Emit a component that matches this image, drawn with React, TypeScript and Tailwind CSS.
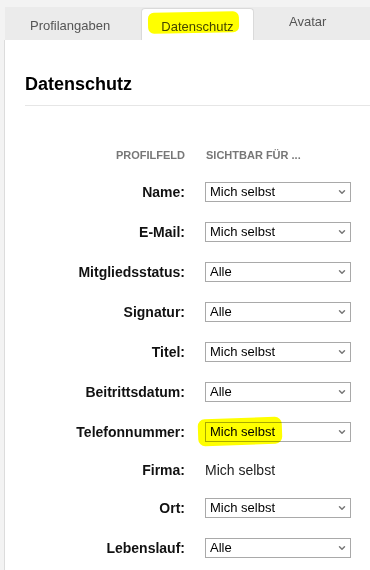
import { ChevronDown } from "lucide-react";

type Row = { label: string; value: string; fixed?: boolean; marked?: boolean };

const ROWS: Row[] = [
  { label: "Name", value: "Mich selbst" },
  { label: "E-Mail", value: "Mich selbst" },
  { label: "Mitgliedsstatus", value: "Alle" },
  { label: "Signatur", value: "Alle" },
  { label: "Titel", value: "Mich selbst" },
  { label: "Beitrittsdatum", value: "Alle" },
  { label: "Telefonnummer", value: "Mich selbst", marked: true },
  { label: "Firma", value: "Mich selbst", fixed: true },
  { label: "Ort", value: "Mich selbst" },
  { label: "Lebenslauf", value: "Alle" },
];

const OPTIONS = ["Mich selbst", "Mitglieder", "Alle"];

function VisibilitySelect({ value, marked }: { value: string; marked?: boolean }) {
  return (
    <div className="relative w-[146px] h-[20px]">
      <select
        defaultValue={value}
        className="block w-full h-full appearance-none border border-[#a9a9a9] bg-white pl-[4px] pr-[16px] text-[13px] leading-[18px] text-black outline-none"
      >
        {OPTIONS.map((o) => (
          <option key={o}>{o}</option>
        ))}
      </select>
      <ChevronDown
        className="pointer-events-none absolute right-[4px] top-[5px] h-[10px] w-[10px] text-[#777]"
        strokeWidth={3.5}
        aria-hidden="true"
      />
      {/* marker stroke */}
      {marked && (
        <div
          className="pointer-events-none absolute left-[-7px] top-[-4px] h-[27px] w-[84px] -rotate-2 rounded-[7px] bg-[#ffff00] mix-blend-multiply"
          aria-hidden="true"
        />
      )}
    </div>
  );
}

export default function App() {
  return (
    <div className="min-h-screen bg-[#f3f3f3] pt-[7px] pl-[4px] font-['Liberation_Sans',Arial,sans-serif]">
      {/* Tabs */}
      <div className="ml-[1px] flex h-[33px] items-end bg-[#ebebeb] text-[13px] leading-[15px] text-[#555]">
        <div className="h-full w-[136px] pl-[25px] pt-[11px]">Profilangaben</div>
        <div className="relative h-[32px] w-[113px] rounded-t-[4px] border border-b-0 border-[#dadada] bg-white pt-[10px] text-center text-[#444]">
          Datenschutz
          <div
            className="pointer-events-none absolute left-[6px] top-[3px] h-[21px] w-[91px] -rotate-1 rounded-[6px] bg-[#ffff00] mix-blend-multiply"
            aria-hidden="true"
          />
        </div>
        <div className="h-full pl-[35px] pt-[7px]">Avatar</div>
      </div>

      {/* Panel */}
      <div className="min-h-[530px] border-l border-[#dcdcdc] bg-white pl-[20px] pt-[33px]">
        <h2 className="border-b border-[#e6e6e6] pb-[10px] text-[18px] font-bold leading-[22px] text-black">
          Datenschutz
        </h2>

        <div className="mt-[42px]">
          <div className="mb-[10px] flex h-[14px] items-center text-[11px] font-bold uppercase leading-[14px] text-[#777]">
            <div className="w-[160px] text-right">Profilfeld</div>
            <div className="ml-[21px]">Sichtbar für ...</div>
          </div>

          {ROWS.map((row) => (
            <div
              key={row.label}
              className={`flex items-center ${row.fixed ? "h-[36px]" : "h-[40px]"}`}
            >
              <div className="w-[160px] text-right text-[14px] font-bold leading-[16px] text-[#111]">
                {row.label}:
              </div>
              <div className="ml-[20px]">
                {row.fixed ? (
                  <span className="text-[14px] leading-[16px] text-[#222]">{row.value}</span>
                ) : (
                  <VisibilitySelect value={row.value} marked={row.marked} />
                )}
              </div>
            </div>
          ))}
        </div>
      </div>
    </div>
  );
}
